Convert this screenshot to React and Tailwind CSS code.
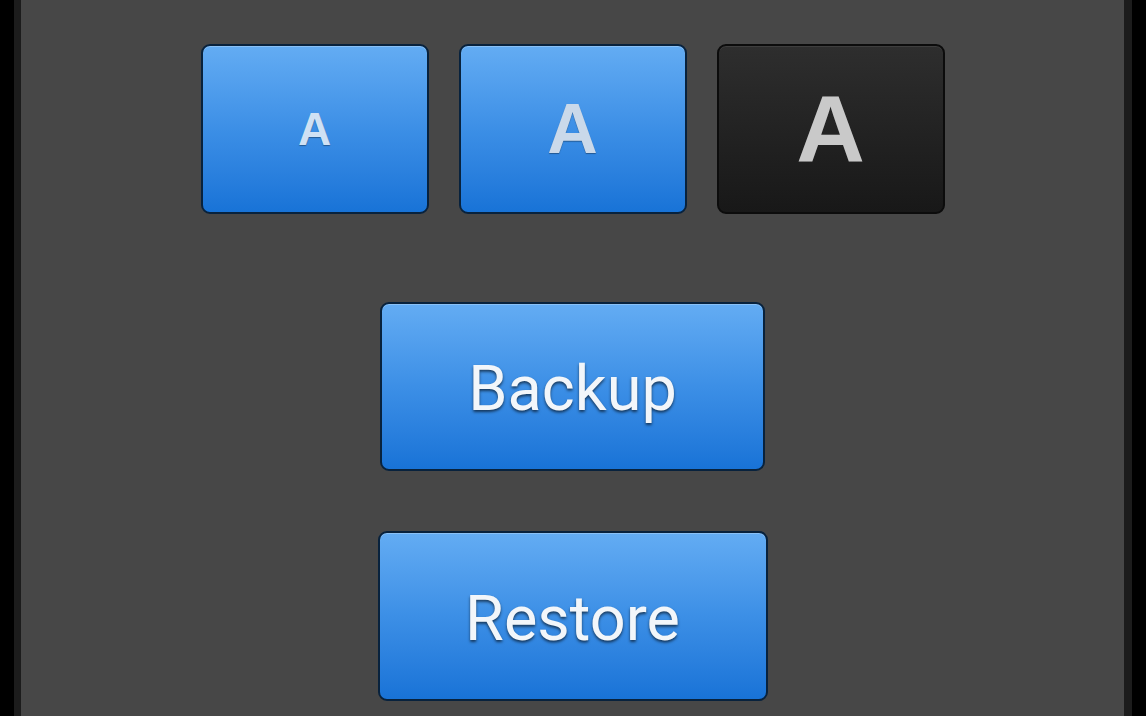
export default function App() {
  const blue =
    "rounded-[9px] border-2 border-[#08223d] bg-gradient-to-b from-[#63acf3] via-[#3c8fe6] to-[#1873d7] shadow-[inset_0_1px_0_rgba(255,255,255,0.25)] flex items-center justify-center";
  return (
    <div className="flex h-[716px] w-[1146px] bg-black overflow-hidden">
      <div className="w-[14px] bg-black" />
      <div className="w-[7px] bg-[#1c1c1c]" />
      <div className="flex-1 bg-[#474747] flex flex-col items-center pt-[44px]">
        <div className="flex gap-[30px]">
          <div className={`w-[228px] h-[170px] ${blue}`}>
            <span className="font-['Liberation_Sans',Arial,sans-serif] font-bold text-[46px] leading-none text-[#cfe1f4] [text-shadow:0_1px_1px_rgba(0,0,0,0.35)]">
              A
            </span>
          </div>
          <div className={`w-[228px] h-[170px] ${blue}`}>
            <span className="font-['Liberation_Sans',Arial,sans-serif] font-bold text-[70px] leading-none text-[#cad9ea] [text-shadow:0_1px_1px_rgba(0,0,0,0.35)]">
              A
            </span>
          </div>
          <div className="w-[228px] h-[170px] rounded-[9px] border-2 border-[#0c0c0c] bg-gradient-to-b from-[#2e2e2e] to-[#181818] shadow-[inset_0_1px_0_rgba(255,255,255,0.08)] flex items-center justify-center">
            <span className="font-['Liberation_Sans',Arial,sans-serif] font-bold text-[95px] leading-none text-[#c9c9c9]">
              A
            </span>
          </div>
        </div>
        <div className={`mt-[88px] w-[385px] h-[169px] ${blue}`}>
          <span className="font-['Roboto',sans-serif] text-[63px] leading-none text-[#f2f6fa] pt-[4px] [text-shadow:0_2px_3px_rgba(0,0,0,0.6)]">
            Backup
          </span>
        </div>
        <div className={`mt-[60px] w-[390px] h-[170px] ${blue}`}>
          <span className="font-['Roboto',sans-serif] text-[63px] leading-none text-[#f2f6fa] pt-[4px] [text-shadow:0_2px_3px_rgba(0,0,0,0.6)]">
            Restore
          </span>
        </div>
      </div>
      <div className="w-[8px] bg-[#1c1c1c]" />
      <div className="w-[14px] bg-black" />
    </div>
  );
}
